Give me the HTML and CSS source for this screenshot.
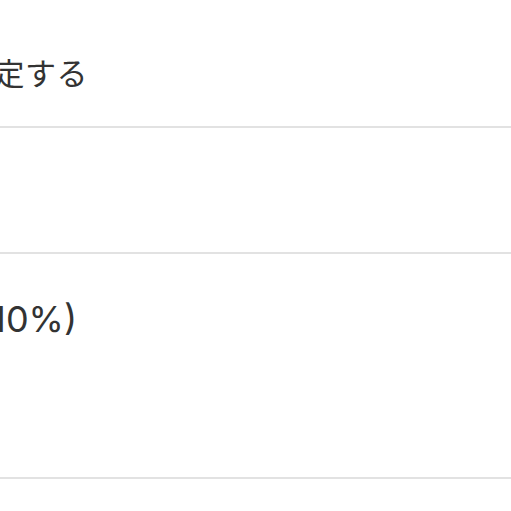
FILE: index.html
```html
<!DOCTYPE html>
<html lang="ja">
<head>
    <meta charset="UTF-8" />
    <title>設定</title>
    <link rel="stylesheet" href="styles.css">
</head>
<body>
    <div id="settings-list">
        <div class="row row-top">
            <span class="label label-first">設定する</span>
        </div>
        <div class="row row-mid"></div>
        <div class="row row-tall">
            <span class="label label-tax">税率 (10%)</span>
        </div>
    </div>
</body>
</html>
```
FILE: styles.css
```css
body {
    margin: 0;
    font-family: "Noto Sans CJK JP", "Noto Sans", sans-serif;
    background-color: #ffffff;
    color: #333333;
    overflow: hidden;
}

#settings-list {
    display: flex;
    flex-direction: column;
}

.row {
    display: flex;
    align-items: flex-start;
    box-sizing: border-box;
    border-bottom: 2px solid #e2e2e2;
    white-space: nowrap;
}

.row-top {
    height: 128px;
    padding-top: 53px;
}

.row-mid {
    height: 126px;
}

.row-tall {
    height: 225px;
    padding-top: 46px;
}

.label {
    font-size: 31px;
    line-height: 38px;
}

.label-first {
    margin-left: -38px;
    letter-spacing: 0.5px;
}

.label-tax {
    font-family: Inter, "Noto Sans CJK JP", sans-serif;
    font-size: 36px;
    margin-left: -104px;
}
```
